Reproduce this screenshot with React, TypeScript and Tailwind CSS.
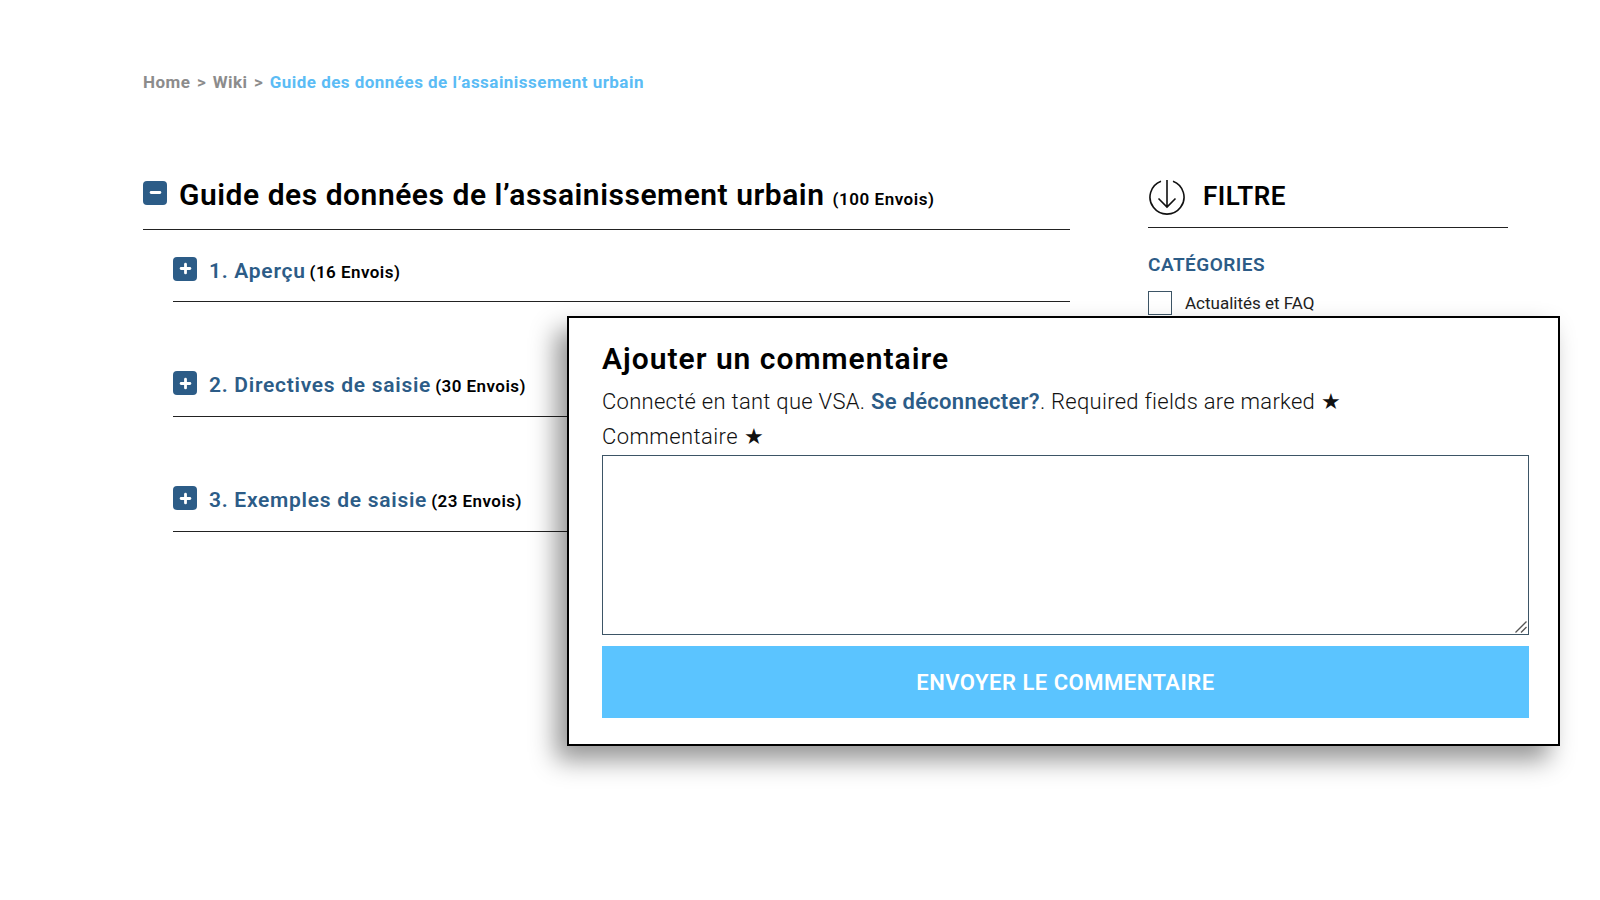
import { Minus, Plus } from "lucide-react";

const font = "font-['Roboto',sans-serif]";

const sections = [
  { title: "1. Aperçu", count: "(16 Envois)", rowClass: "h-[72px] pt-[6px]" },
  { title: "2. Directives de saisie", count: "(30 Envois)", rowClass: "h-[115px] pt-[48px]" },
  { title: "3. Exemples de saisie", count: "(23 Envois)", rowClass: "h-[115px] pt-[48px]" },
];

const ToggleIcon = ({ open }: { open?: boolean }) => (
  <span className="flex size-6 shrink-0 items-center justify-center rounded-[4px] bg-[#2c5c87] text-white">
    {open ? (
      <Minus size={15} strokeWidth={4.5} />
    ) : (
      <Plus size={15} strokeWidth={4.5} />
    )}
  </span>
);

const SectionRow = ({
  title,
  count,
  rowClass,
}: {
  title: string;
  count: string;
  rowClass: string;
}) => (
  <div className={`flex items-center gap-3 border-b border-[#222] ${rowClass}`}>
    <ToggleIcon />
    <div className="flex items-baseline gap-[4px] pt-[6px]">
      <span className="text-[21px] font-semibold tracking-[0.72px] text-[#2c5c87]">{title}</span>
      <span className="text-[17px] font-semibold tracking-[0.45px] text-black">{count}</span>
    </div>
  </div>
);

const CommentModal = () => (
  <div className="absolute top-[316px] left-[567px] flex h-[430px] w-[993px] flex-col border-2 border-black bg-white pt-[23px] pr-[29px] pl-[33px] text-[#111] shadow-[-11px_14px_24px_rgba(0,0,0,0.42)]">
    <h2 className="text-[30px] leading-[36px] font-semibold tracking-[1px] text-black">
      Ajouter un commentaire
    </h2>
    <p className="mt-[9px] text-[22px] leading-[32px] font-light tracking-[0.28px]">
      Connecté en tant que VSA.{" "}
      <a className="font-semibold text-[#2c5c87]">Se déconnecter?</a>. Required
      fields are marked ★
    </p>
    <label className="mt-[3px] text-[22px] leading-[32px] font-light tracking-[0.4px]">
      Commentaire ★
    </label>
    <div className="relative mt-[2px] h-[180px] w-full">
      <textarea className="block h-full w-full resize-none border border-[#3d5566] bg-white" />
      <svg viewBox="0 0 12 12" className="absolute right-[2px] bottom-[2px] size-3" stroke="#555" strokeWidth="1.3" fill="none">
        <path d="M0.5 11.5 11.5 0.5M6 11.5l5.5-5.5" />
      </svg>
    </div>
    <button className="mt-[11px] flex h-[72px] w-full items-center justify-center bg-[#5bc4ff] text-[22px] font-semibold tracking-[0.5px] text-white">
      ENVOYER LE COMMENTAIRE
    </button>
  </div>
);

export default function App() {
  return (
    <div className={`relative h-[900px] w-[1600px] overflow-hidden bg-white ${font}`}>
      <div className="px-[143px] pt-[72px]">
        <nav className="flex h-[22px] items-center gap-[6.5px] text-[17px] font-bold tracking-[0.47px] text-[#8c8c8c]">
          <span>Home</span>
          <span>&gt;</span>
          <span>Wiki</span>
          <span>&gt;</span>
          <span className="text-[#5bbcf5]">Guide des données de l’assainissement urbain</span>
        </nav>

        <div className="mt-[80px] flex items-start">
          <main className="w-[927px] shrink-0">
            <div className="flex h-[56px] items-center gap-3 border-b border-[#222] pb-[18px]">
              <ToggleIcon open />
              <div className="flex items-baseline gap-2 pt-[4px]">
                <h1 className="text-[30px] font-semibold tracking-[0.53px] text-black">
                  Guide des données de l’assainissement urbain
                </h1>
                <span className="text-[17px] font-semibold tracking-[0.55px] text-black">(100 Envois)</span>
              </div>
            </div>
            <div className="ml-[30px]">
              {sections.map((s) => (
                <SectionRow key={s.title} {...s} />
              ))}
            </div>
          </main>

          <aside className="ml-[78px] w-[360px] shrink-0">
            <div className="flex h-[54px] items-center gap-[17px] border-b border-[#222] pb-[8px]">
              <svg viewBox="0 0 38 38" className="size-[38px]" fill="none" stroke="#111" strokeWidth="1.6">
                <path d="M13 3.2a17 17 0 1 0 12 0" />
                <path d="M19 2v27M10.5 20.5 19 29l8.5-8.5" />
              </svg>
              <span className="text-[26px] font-semibold tracking-[0.5px] text-black">FILTRE</span>
            </div>
            <h3 className="mt-[25px] text-[19px] leading-[24px] font-semibold tracking-wide text-[#2c5c87]">
              CATÉGORIES
            </h3>
            <div className="mt-[12px] flex items-center gap-[13px]">
              <span className="size-6 border border-[#3d5566]" />
              <span className="pt-[2px] text-[17px] text-[#222]">Actualités et FAQ</span>
            </div>
          </aside>
        </div>
      </div>

      <CommentModal />
    </div>
  );
}
